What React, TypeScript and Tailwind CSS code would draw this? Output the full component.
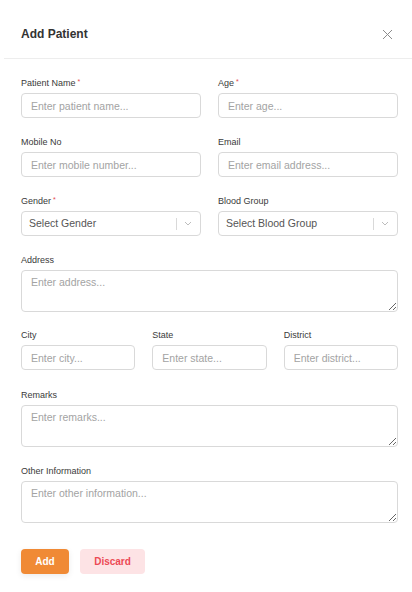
import type { ReactNode } from "react";

const font = { fontFamily: '"Liberation Sans", Arial, Helvetica, sans-serif' };

const inputCls =
  "h-[25px] w-full rounded-[4px] border border-[#d9d9d9] bg-white px-[9px] text-[10.5px] text-[#333] outline-none placeholder:text-[#a3a3a3]";

const areaCls =
  "block h-[42px] w-full rounded-[4px] border border-[#d9d9d9] bg-white px-[9px] py-[4px] text-[10.5px] leading-[14px] text-[#333] outline-none placeholder:text-[#a3a3a3]";

function Label({ text, required }: { text: string; required?: boolean }) {
  return (
    <div className="mb-[2px] flex h-[14px] items-center text-[9px] text-[#3a3a3a]">
      {text}
      {required ? (
        <span className="ml-[2px] -mt-[4px] text-[7px] text-[#e5484d]">*</span>
      ) : null}
    </div>
  );
}

function Field({
  label,
  required,
  children,
}: {
  label: string;
  required?: boolean;
  children: ReactNode;
}) {
  return (
    <div className="flex flex-col">
      <Label text={label} required={required} />
      {children}
    </div>
  );
}

function Select({ placeholder }: { placeholder: string }) {
  return (
    <div className="flex h-[25px] w-full items-center rounded-[4px] border border-[#d9d9d9] bg-white pl-[7px] pr-[8px]">
      <span className="flex-1 text-[10.5px] text-[#555]">{placeholder}</span>
      <span className="h-[12px] w-px bg-[#d9d9d9]" />
      <svg
        width="8"
        height="5"
        viewBox="0 0 8 5"
        className="ml-[7px]"
        fill="none"
        stroke="#b5b5b5"
        strokeWidth="0.9"
      >
        <path d="M1 1l3 3 3-3" />
      </svg>
    </div>
  );
}

export default function App() {
  return (
    <div className="min-h-[592px] w-[412px] bg-white" style={font}>
      <div className="flex items-center justify-between pl-[21px] pr-[19px] pt-[24px] pb-[14px]">
        <h2 className="text-[12px] font-bold leading-[20px] text-[#333]">
          Add Patient
        </h2>
        <svg
          width="11"
          height="11"
          viewBox="0 0 11 11"
          fill="none"
          stroke="#8c8c8c"
          strokeWidth="1"
        >
          <path d="M1 1l9 9M10 1l-9 9" />
        </svg>
      </div>
      <div className="ml-1 h-px bg-[#ededed]" />

      <form className="flex flex-col pl-[21px] pr-[14px] pt-[18px]">
        <div className="grid grid-cols-2 gap-x-[17px] gap-y-[18px]">
          <Field label="Patient Name" required>
            <input className={inputCls} placeholder="Enter patient name..." />
          </Field>
          <Field label="Age" required>
            <input className={inputCls} placeholder="Enter age..." />
          </Field>
          <Field label="Mobile No">
            <input className={inputCls} placeholder="Enter mobile number..." />
          </Field>
          <Field label="Email">
            <input className={inputCls} placeholder="Enter email address..." />
          </Field>
          <Field label="Gender" required>
            <Select placeholder="Select Gender" />
          </Field>
          <Field label="Blood Group">
            <Select placeholder="Select Blood Group" />
          </Field>
        </div>

        <div className="mt-[18px]">
          <Field label="Address">
            <textarea className={areaCls} placeholder="Enter address..." />
          </Field>
        </div>

        <div className="mt-[17px] grid grid-cols-3 gap-x-[17px]">
          <Field label="City">
            <input className={inputCls} placeholder="Enter city..." />
          </Field>
          <Field label="State">
            <input className={inputCls} placeholder="Enter state..." />
          </Field>
          <Field label="District">
            <input className={inputCls} placeholder="Enter district..." />
          </Field>
        </div>

        <div className="mt-[19px]">
          <Field label="Remarks">
            <textarea className={areaCls} placeholder="Enter remarks..." />
          </Field>
        </div>

        <div className="mt-[18px]">
          <Field label="Other Information">
            <textarea
              className={areaCls}
              placeholder="Enter other information..."
            />
          </Field>
        </div>

        <div className="mt-[26px] flex gap-[11px]">
          <button
            type="button"
            className="h-[25px] w-[48px] rounded-[4px] bg-[#f08a35] text-[10px] font-bold text-white shadow-[0_2px_6px_rgba(0,0,0,0.08)]"
          >
            Add
          </button>
          <button
            type="button"
            className="h-[25px] w-[65px] rounded-[4px] bg-[#fde3e5] text-[10px] font-bold text-[#ec4a55]"
          >
            Discard
          </button>
        </div>
      </form>
    </div>
  );
}
